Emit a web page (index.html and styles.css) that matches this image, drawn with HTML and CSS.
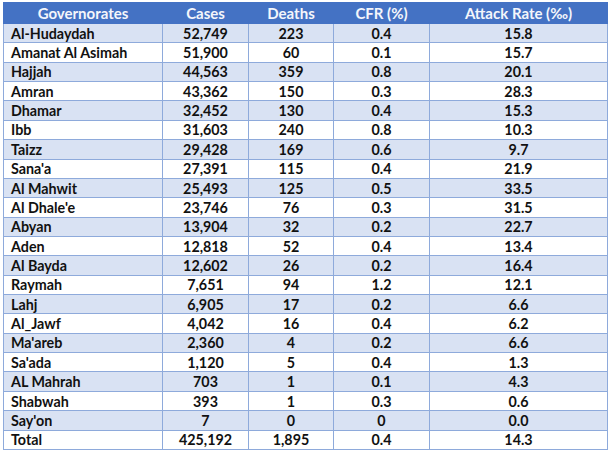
FILE: index.html
```html
<!DOCTYPE html>
<html>
<head>
<meta charset="utf-8">
<link rel="stylesheet" href="styles.css">
</head>
<body>
<table class="data">
  <colgroup>
    <col class="c-gov"><col class="c-cases"><col class="c-deaths"><col class="c-cfr"><col class="c-ar">
  </colgroup>
  <thead>
    <tr><th>Governorates</th><th>Cases</th><th>Deaths</th><th>CFR (%)</th><th>Attack Rate (‰)</th></tr>
  </thead>
  <tbody>
    <tr><td>Al-Hudaydah</td><td>52,749</td><td>223</td><td>0.4</td><td>15.8</td></tr>
    <tr><td>Amanat Al Asimah</td><td>51,900</td><td>60</td><td>0.1</td><td>15.7</td></tr>
    <tr><td>Hajjah</td><td>44,563</td><td>359</td><td>0.8</td><td>20.1</td></tr>
    <tr><td>Amran</td><td>43,362</td><td>150</td><td>0.3</td><td>28.3</td></tr>
    <tr><td>Dhamar</td><td>32,452</td><td>130</td><td>0.4</td><td>15.3</td></tr>
    <tr><td>Ibb</td><td>31,603</td><td>240</td><td>0.8</td><td>10.3</td></tr>
    <tr><td>Taizz</td><td>29,428</td><td>169</td><td>0.6</td><td>9.7</td></tr>
    <tr><td>Sana'a</td><td>27,391</td><td>115</td><td>0.4</td><td>21.9</td></tr>
    <tr><td>Al Mahwit</td><td>25,493</td><td>125</td><td>0.5</td><td>33.5</td></tr>
    <tr><td>Al Dhale'e</td><td>23,746</td><td>76</td><td>0.3</td><td>31.5</td></tr>
    <tr><td>Abyan</td><td>13,904</td><td>32</td><td>0.2</td><td>22.7</td></tr>
    <tr><td>Aden</td><td>12,818</td><td>52</td><td>0.4</td><td>13.4</td></tr>
    <tr><td>Al Bayda</td><td>12,602</td><td>26</td><td>0.2</td><td>16.4</td></tr>
    <tr><td>Raymah</td><td>7,651</td><td>94</td><td>1.2</td><td>12.1</td></tr>
    <tr><td>Lahj</td><td>6,905</td><td>17</td><td>0.2</td><td>6.6</td></tr>
    <tr><td>Al_Jawf</td><td>4,042</td><td>16</td><td>0.4</td><td>6.2</td></tr>
    <tr><td>Ma'areb</td><td>2,360</td><td>4</td><td>0.2</td><td>6.6</td></tr>
    <tr><td>Sa'ada</td><td>1,120</td><td>5</td><td>0.4</td><td>1.3</td></tr>
    <tr><td>AL Mahrah</td><td>703</td><td>1</td><td>0.1</td><td>4.3</td></tr>
    <tr><td>Shabwah</td><td>393</td><td>1</td><td>0.3</td><td>0.6</td></tr>
    <tr><td>Say'on</td><td>7</td><td>0</td><td>0</td><td>0.0</td></tr>
    <tr class="total"><td>Total</td><td>425,192</td><td>1,895</td><td>0.4</td><td>14.3</td></tr>
  </tbody>
</table>
</body>
</html>
```

FILE: styles.css
```css
html, body {
  margin: 0;
  padding: 0;
  background: #ffffff;
}
body {
  padding: 2px 0 0 3px;
}
.data {
  border-collapse: collapse;
  table-layout: fixed;
  width: 604px;
  font-family: Lato, "Open Sans", sans-serif;
  font-weight: 700;
  font-size: 14.3px;
  color: #111111;
}
.c-gov { width: 159px; }
.c-cases { width: 86px; }
.c-deaths { width: 85px; }
.c-cfr { width: 96px; }
.c-ar { width: 178px; }

.data th {
  background: #4472c4;
  color: #f4f6fb;
  height: 20px;
  padding: 0;
  text-align: center;
  font-weight: 700;
  font-size: 15px;
  border: 1px solid #4472c4;
  line-height: 18px;
}
.data td {
  height: 18.36px;
  padding: 0;
  text-align: center;
  border: 1px solid #8eaadb;
  line-height: 17px;
}
.data td:first-child {
  text-align: left;
  padding-left: 7px;
}
.data tbody tr:nth-child(odd) td {
  background: #d9e2f3;
}
.data tbody tr:nth-child(even) td {
  background: #ffffff;
}
```
